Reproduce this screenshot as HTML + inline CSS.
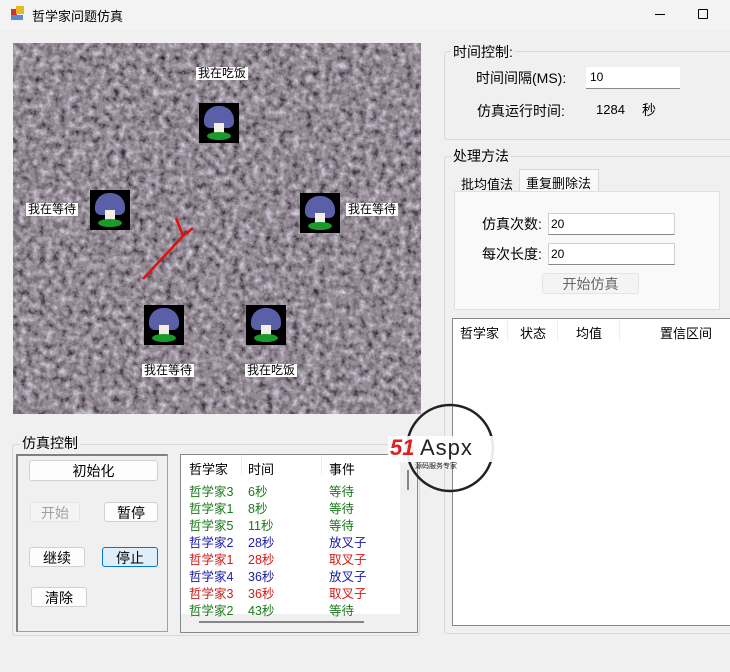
<!DOCTYPE html>
<html><head><meta charset="utf-8"><style>
*{margin:0;padding:0;box-sizing:border-box}
body{width:730px;height:672px;background:#f0f0f0;font-family:"Liberation Sans","Noto Sans CJK SC",sans-serif;font-size:13px;color:#000;position:relative;overflow:hidden}
.a{position:absolute}
.btn{position:absolute;background:#fdfdfd;border:1px solid #d0d0d0;border-radius:3px;text-align:center;font-size:14px}
.lbl{position:absolute;background:#fff;font-size:12px;line-height:13px;padding:0 2px}
.av{position:absolute;width:40px;height:40px;background:#000}
.av i{position:absolute;left:5px;top:3px;width:30px;height:22px;background:#5a60a8;border-radius:14px 14px 6px 6px}
.av b{position:absolute;left:8px;bottom:3px;width:24px;height:8px;background:#1a9a2a;border-radius:50%}
.av u{position:absolute;left:15px;top:20px;width:10px;height:14px;background:#f4eee8}
.grp{position:absolute;border:1px solid #d8d8d8;border-radius:3px}
.row{position:absolute;left:8px;font-size:12.5px;white-space:nowrap}
.row span{position:absolute}
.g{color:#1a7a1a}.bl{color:#1a1aa8}.r{color:#d01a1a}
</style></head><body>
<div class="a" style="left:0;top:0;width:730px;height:30px;background:#f3f3f3"></div>
<div class="a" style="left:11px;top:9px;width:6px;height:6px;background:#c33"></div>
<div class="a" style="left:16px;top:6px;width:8px;height:8px;background:#e8b820"></div>
<div class="a" style="left:11px;top:15px;width:12px;height:5px;background:#5a8ad0"></div>
<div class="a" style="left:32px;top:6px;font-size:13px">哲学家问题仿真</div>
<div class="a" style="left:655px;top:14px;width:10px;height:1px;background:#000"></div>
<div class="a" style="left:698px;top:9px;width:10px;height:10px;border:1px solid #000;border-radius:1px"></div>

<svg class="a" style="left:13px;top:43px" width="408" height="371">
<filter id="n" color-interpolation-filters="sRGB" x="0" y="0" width="1" height="1"><feTurbulence type="fractalNoise" baseFrequency="0.15" numOctaves="3" seed="3"/>
<feColorMatrix values="1 0 0 0 0  1 0 0 0 0  1 0 0 0 0  0 0 0 0 1"/>
<feComponentTransfer><feFuncR type="discrete" tableValues="0.12 0.3 0.48 0.58 0.66 0.76 0.86"/><feFuncG type="discrete" tableValues="0.12 0.28 0.44 0.54 0.63 0.74 0.86"/><feFuncB type="discrete" tableValues="0.15 0.32 0.48 0.58 0.68 0.8 0.92"/></feComponentTransfer></filter>
<rect width="408" height="371" fill="#938a92"/>
<rect width="408" height="371" filter="url(#n)"/>
<path d="M130 236 L170 193 M170 193 L163 175 M170 193 L180 185" stroke="#e01010" stroke-width="2.5" fill="none"/>
</svg>
<div class="lbl" style="left:196px;top:67px">我在吃饭</div>
<div class="lbl" style="left:26px;top:203px">我在等待</div>
<div class="lbl" style="left:346px;top:203px">我在等待</div>
<div class="lbl" style="left:142px;top:364px">我在等待</div>
<div class="lbl" style="left:245px;top:364px">我在吃饭</div>
<div class="av" style="left:199px;top:103px"><i></i><u></u><b></b></div>
<div class="av" style="left:90px;top:190px"><i></i><u></u><b></b></div>
<div class="av" style="left:300px;top:193px"><i></i><u></u><b></b></div>
<div class="av" style="left:144px;top:305px"><i></i><u></u><b></b></div>
<div class="av" style="left:246px;top:305px"><i></i><u></u><b></b></div>

<div class="grp" style="left:12px;top:444px;width:408px;height:192px"></div>
<div class="a" style="left:20px;top:433px;background:#f0f0f0;padding:0 2px;font-size:14px">仿真控制</div>
<div class="a" style="left:16px;top:454px;width:152px;height:178px;border:1px solid #a0a0a0;border-left:2px solid #808080;border-top:2px solid #808080"></div>
<div class="btn" style="left:29px;top:460px;width:129px;height:21px">初始化</div>
<div class="btn" style="left:30px;top:502px;width:50px;height:20px;color:#a0a0a0;background:#f4f4f4;border-color:#e4e4e4">开始</div>
<div class="btn" style="left:104px;top:502px;width:54px;height:20px">暂停</div>
<div class="btn" style="left:29px;top:547px;width:56px;height:20px">继续</div>
<div class="btn" style="left:102px;top:547px;width:56px;height:20px;background:#e0eef9;border-color:#0078d4">停止</div>
<div class="btn" style="left:31px;top:587px;width:56px;height:20px">清除</div>

<div class="a" style="left:180px;top:454px;width:238px;height:179px;border:1px solid #828790;background:#f0f0f0"></div>
<div class="a" style="left:181px;top:455px;width:219px;height:159px;background:#fff">
<div class="row" style="top:4px;font-size:13px"><span style="left:0">哲学家</span><span style="left:59px">时间</span><span style="left:140px">事件</span></div>
<div class="a" style="left:60px;top:0;width:1px;height:20px;background:#eee"></div>
<div class="a" style="left:140px;top:0;width:1px;height:20px;background:#eee"></div>
<div class="row g" style="top:26px"><span>哲学家3</span><span style="left:59px">6秒</span><span style="left:140px">等待</span></div>
<div class="row g" style="top:43px"><span>哲学家1</span><span style="left:59px">8秒</span><span style="left:140px">等待</span></div>
<div class="row g" style="top:60px"><span>哲学家5</span><span style="left:59px">11秒</span><span style="left:140px">等待</span></div>
<div class="row bl" style="top:77px"><span>哲学家2</span><span style="left:59px">28秒</span><span style="left:140px">放叉子</span></div>
<div class="row r" style="top:94px"><span>哲学家1</span><span style="left:59px">28秒</span><span style="left:140px">取叉子</span></div>
<div class="row bl" style="top:111px"><span>哲学家4</span><span style="left:59px">36秒</span><span style="left:140px">放叉子</span></div>
<div class="row r" style="top:128px"><span>哲学家3</span><span style="left:59px">36秒</span><span style="left:140px">取叉子</span></div>
<div class="row g" style="top:145px"><span>哲学家2</span><span style="left:59px">43秒</span><span style="left:140px">等待</span></div>
</div>
<div class="a" style="left:199px;top:621px;width:165px;height:2px;background:#858585"></div>
<div class="a" style="left:407px;top:470px;width:2px;height:20px;background:#858585"></div>

<div class="grp" style="left:444px;top:51px;width:290px;height:89px"></div>
<div class="a" style="left:451px;top:42px;background:#f0f0f0;padding:0 2px;font-size:14px">时间控制:</div>
<div class="a" style="left:476px;top:68px;font-size:14px">时间间隔(MS):</div>
<div class="a" style="left:586px;top:67px;width:94px;height:22px;background:#fff;border-bottom:1px solid #888;font-size:12px;padding:3px 4px">10</div>
<div class="a" style="left:477px;top:101px;font-size:14px">仿真运行时间:</div>
<div class="a" style="left:596px;top:102px;font-size:13px">1284</div>
<div class="a" style="left:642px;top:100px;font-size:14px">秒</div>

<div class="grp" style="left:444px;top:156px;width:290px;height:478px"></div>
<div class="a" style="left:451px;top:146px;background:#f0f0f0;padding:0 2px;font-size:14px">处理方法</div>
<div class="a" style="left:461px;top:174px;font-size:13px">批均值法</div>
<div class="a" style="left:519px;top:169px;width:80px;height:23px;background:#f9f9f9;border:1px solid #d8d8d8;border-bottom:none;font-size:13px;padding:3px 6px;white-space:nowrap">重复删除法</div>
<div class="a" style="left:454px;top:191px;width:266px;height:119px;background:#f9f9f9;border:1px solid #e0e0e0"></div>
<div class="a" style="left:482px;top:214px;font-size:14px">仿真次数:</div>
<div class="a" style="left:548px;top:213px;width:127px;height:22px;background:#fff;border:1px solid #d0d0d0;border-bottom-color:#888;font-size:12px;padding:3px 2px">20</div>
<div class="a" style="left:482px;top:244px;font-size:14px">每次长度:</div>
<div class="a" style="left:548px;top:243px;width:127px;height:22px;background:#fff;border:1px solid #d0d0d0;border-bottom-color:#888;font-size:12px;padding:3px 2px">20</div>
<div class="btn" style="left:542px;top:273px;width:97px;height:21px;color:#666;background:#f4f4f4;border-color:#e4e4e4">开始仿真</div>

<div class="a" style="left:452px;top:318px;width:280px;height:308px;background:#fff;border:1px solid #828790"></div>
<div class="a" style="left:460px;top:323px;font-size:13px">哲学家</div>
<div class="a" style="left:520px;top:323px;font-size:13px">状态</div>
<div class="a" style="left:576px;top:323px;font-size:13px">均值</div>
<div class="a" style="left:660px;top:323px;font-size:13px">置信区间</div>
<div class="a" style="left:507px;top:320px;width:1px;height:22px;background:#eee"></div>
<div class="a" style="left:557px;top:320px;width:1px;height:22px;background:#eee"></div>
<div class="a" style="left:619px;top:320px;width:1px;height:22px;background:#eee"></div>

<svg class="a" style="left:388px;top:400px" width="130" height="100">
<circle cx="62" cy="48" r="43" fill="none" stroke="#222" stroke-width="2.5"/>
<rect x="0" y="36" width="128" height="26" fill="#fff" opacity="0.9"/>
<text x="2" y="55" font-family="Liberation Sans" font-weight="bold" font-style="italic" font-size="22" fill="#e02020">51</text>
<text x="32" y="55" font-family="Liberation Sans" font-size="22" fill="#222" letter-spacing="1">Aspx</text>
<text x="27" y="68" font-family="Noto Sans CJK SC" font-size="7" fill="#222">源码服务专家</text>
</svg>
</body></html>
